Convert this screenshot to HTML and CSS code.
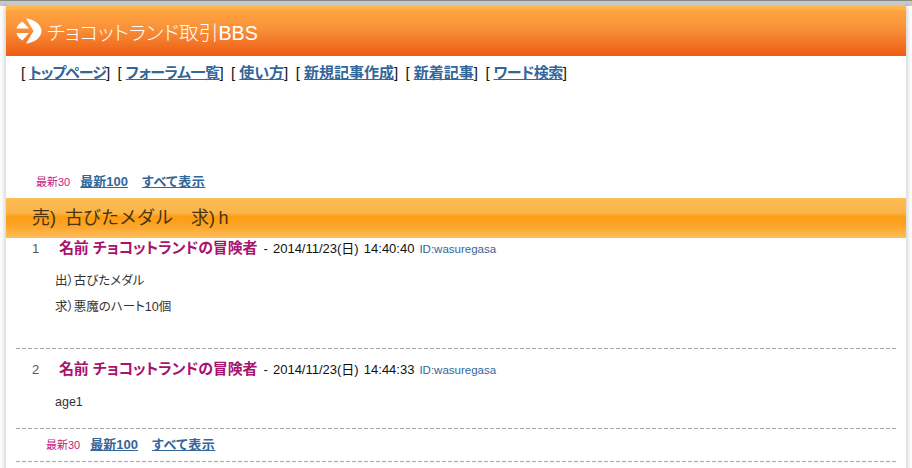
FILE: index.html
```html
<!DOCTYPE html>
<html lang="ja">
<head>
    <meta charset="UTF-8">
    <meta name="viewport" content="width=device-width, initial-scale=1.0">
    <title>チョコットランド取引BBS</title>
    <link rel="stylesheet" href="styles.css">
</head>
<body>
    <div class="wrapper">
        <div class="header">
            <svg class="logo" width="27" height="26" viewBox="0 0 27 26">
                <path d="M1.5 10.5 C2 8 4.5 5 7.5 3.5 L14 10.5 Z M1.5 15 L14 15 L7.5 22.5 C4.5 21 2 18 1.5 15 Z" fill="#fff"/>
                <path d="M11 .5 C20 1.5 26.5 7 26.5 13 C26.5 19 20 24.5 11 25.5 L18.5 13 Z" fill="#fff"/>
            </svg>
            <h1>チョコットランド取引BBS</h1>
        </div>
        <p class="nav">[<a class="tight" href="#">トップページ</a>] [<a class="snug" href="#">フォーラム一覧</a>] [<a href="#">使い方</a>] [<a href="#">新規記事作成</a>] [<a href="#">新着記事</a>] [<a class="snug" href="#">ワード検索</a>]</p>
        <p class="pager pager-top"><span class="current">最新30</span><a href="#">最新100</a><a href="#">すべて表示</a></p>
        <h2 class="thread-title">売)&ensp;古びたメダル　求)&thinsp;h</h2>
        <div class="post post-first">
            <p class="post-head"><span class="num">1</span><span class="name">名前 チョコットランドの冒険者</span><span class="date"> - 2014/11/23(日) 14:40:40</span> <span class="uid">ID:wasuregasa</span></p>
            <p class="body-line">出）古びたメダル</p>
            <p class="body-line">求）悪魔のハート10個</p>
        </div>
        <div class="post post-second">
            <p class="post-head"><span class="num">2</span><span class="name">名前 チョコットランドの冒険者</span><span class="date"> - 2014/11/23(日) 14:44:33</span> <span class="uid">ID:wasuregasa</span></p>
            <p class="body-line">age1</p>
        </div>
        <p class="pager pager-bottom"><span class="current">最新30</span><a href="#">最新100</a><a href="#">すべて表示</a></p>
    </div>
</body>
</html>
```

FILE: styles.css
```css
html {
    overflow: hidden;
}
body {
    margin: 0;
    background: linear-gradient(to bottom, #8a8a8a 0, #8a8a8a 1px, #c8c8c8 1px, #c8c8c8 6px, #fff 6px);
    font-family: "Liberation Sans", "Noto Sans CJK JP", sans-serif;
    color: #222;
    height: 468px;
    overflow: hidden;
}
.wrapper {
    width: 900px;
    margin: 0 auto;
    padding-top: 6px;
    height: 462px;
    background: #fff content-box;
    box-shadow: 0 6px 6px rgba(0, 0, 0, 0.3);
}
.header {
    height: 50px;
    display: flex;
    align-items: center;
    gap: 5px;
    padding-left: 9px;
    box-sizing: border-box;
    background: linear-gradient(to bottom, #ffb54e 0, #ffb54e 3px, #ffa23e 5px, #f9923a 22px, #ec5d13 50px);
}
.logo {
    flex: none;
}
.header h1 {
    margin: 0;
    font-size: 19.7px;
    font-weight: 300;
    color: #fff;
    font-feature-settings: "palt";
}
.nav {
    margin: 0;
    padding: 7px 0 0 15px;
    height: 104px;
    font-size: 15px;
    line-height: 20px;
    word-spacing: 3.3px;
    color: #111;
    font-feature-settings: "palt";
}
.nav a {
    margin-left: 4px;
}
.nav .tight {
    letter-spacing: -1px;
}
.nav .snug {
    letter-spacing: -0.5px;
}
.nav a, .pager a {
    color: #336699;
    font-weight: bold;
}
.pager {
    margin: 0;
    font-size: 13px;
    line-height: 16px;
    font-feature-settings: "palt";
}
.pager a {
    margin-left: 14px;
}
.pager .current + a {
    margin-left: 10px;
}
.pager a:last-child {
    letter-spacing: 0.6px;
}
.current {
    color: #c8187e;
    font-size: 11px;
}
.pager-top {
    padding: 7px 0 8px 30px;
}
.thread-title {
    margin: 0;
    height: 40px;
    padding-left: 26px;
    box-sizing: border-box;
    font-size: 18px;
    line-height: 40px;
    font-weight: normal;
    color: #4a3410;
    background: linear-gradient(to bottom, #fcbc55 0, #fab548 15px, #fd9c12 19px, #fda52a 28px, #fdbd5c 40px);
}
.post {
    margin: 0 0 0 10px;
    width: 880px;
    background: repeating-linear-gradient(to right, #a8a8a8 0, #a8a8a8 4px, transparent 4px, transparent 6px) bottom / 100% 1px no-repeat;
    box-sizing: border-box;
}
.post-first {
    height: 111px;
}
.post-second {
    height: 80px;
}
.post-head {
    margin: 0;
    padding-top: 1px;
    line-height: 18px;
    display: flex;
    align-items: baseline;
    white-space: pre;
    font-size: 13px;
    color: #111;
}
.post-second .post-head {
    padding-top: 11px;
}
.num {
    width: 43px;
    padding-left: 16px;
    box-sizing: border-box;
    font-size: 13px;
    color: #555;
}
.name {
    font-size: 15px;
    font-weight: bold;
    letter-spacing: -0.15px;
    color: #a8136e;
    font-feature-settings: "palt";
}
.date {
    margin-left: 1px;
    word-spacing: 1.5px;
}
.uid {
    margin-left: 5px;
    font-size: 11.5px;
    color: #336699;
}
.body-line {
    margin: 8px 0 0 39px;
    font-size: 12.5px;
    line-height: 18px;
    color: #333;
    font-feature-settings: "palt";
}
.post-head + .body-line {
    margin-top: 14px;
}
.pager-bottom {
    padding: 8px 0 8px 40px;
}
.pager-bottom::after {
    content: "";
    display: block;
    height: 1px;
    margin: 8px 10px 0 -30px;
    background: repeating-linear-gradient(to right, #a8a8a8 0, #a8a8a8 4px, transparent 4px, transparent 6px);
}
```
